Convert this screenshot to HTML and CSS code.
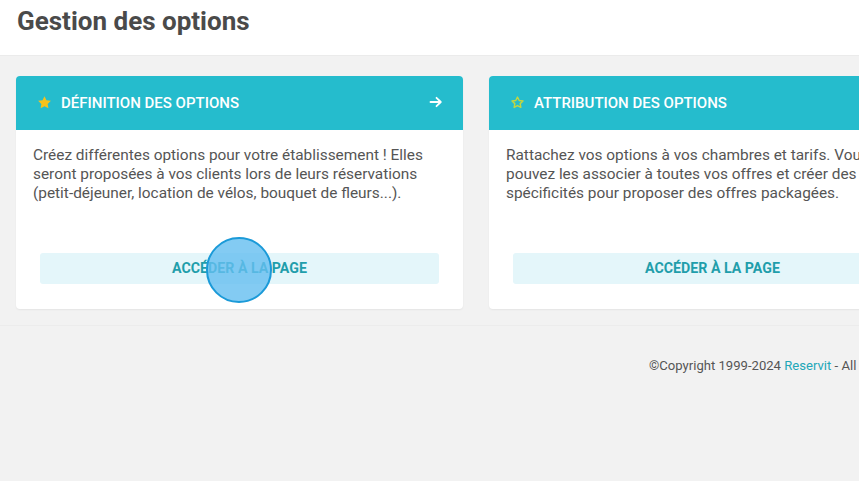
FILE: index.html
```html
<!DOCTYPE html>
<html lang="fr">
<head>
<meta charset="utf-8">
<title>Gestion des options</title>
<link rel="stylesheet" href="styles.css">
</head>
<body>
<div class="page">
  <header class="topbar">
    <h1 class="title">Gestion des options</h1>
  </header>
  <main class="content">
    <div class="cards">
      <section class="card">
        <div class="card-head">
          <svg class="star" width="15" height="15" viewBox="0 0 24 24"><path d="M12 1.8l3.1 6.6 7.1.9-5.2 4.9 1.3 7.1L12 17.8l-6.3 3.5 1.3-7.1-5.2-4.9 7.1-.9z" fill="#f7c21b"/></svg>
          <span class="card-title">Définition des options</span>
          <svg class="arrow" width="14" height="14" viewBox="0 0 14 14"><path d="M1.5 7h10M7.5 2.8L11.8 7l-4.3 4.2" fill="none" stroke="#fff" stroke-width="1.8" stroke-linecap="round" stroke-linejoin="round"/></svg>
        </div>
        <div class="card-body">
          <p class="card-text">Créez différentes options pour votre établissement ! Elles seront proposées à vos clients lors de leurs réservations (petit-déjeuner, location de vélos, bouquet de fleurs...).</p>
          <a class="btn">Accéder à la page</a>
        </div>
        <span class="click-dot"></span>
      </section>
      <section class="card">
        <div class="card-head">
          <svg class="star" width="15" height="15" viewBox="0 0 24 24"><path d="M12 3.2l2.7 5.6 6.1.8-4.5 4.2 1.1 6.1L12 16.9l-5.4 3 1.1-6.1-4.5-4.2 6.1-.8z" fill="none" stroke="#c6d63e" stroke-width="2.2" stroke-linejoin="round"/></svg>
          <span class="card-title">Attribution des options</span>
        </div>
        <div class="card-body">
          <p class="card-text">Rattachez vos options à vos chambres et tarifs. Vous pouvez les associer à toutes vos offres et créer des spécificités pour proposer des offres packagées.</p>
          <a class="btn">Accéder à la page</a>
        </div>
      </section>
    </div>
  </main>
  <footer class="footer">
    <p class="copy">©Copyright 1999-2024 <a class="link">Reservit</a> - All rights reserved</p>
  </footer>
</div>
</body>
</html>
```
FILE: styles.css
```css
* { box-sizing: border-box; }
html, body { margin: 0; padding: 0; }
body {
  background: #f2f2f2;
  font-family: Roboto, "Liberation Sans", Arial, sans-serif;
  color: #555;
  width: 859px;
  height: 481px;
  overflow: hidden;
}
.page { width: 859px; overflow: hidden; }
.topbar {
  background: #fff;
  height: 56px;
  border-bottom: 1px solid #ebebeb;
  padding: 5px 17px 0;
}
.title {
  margin: 0;
  font-size: 26px;
  font-weight: 700;
  color: #4a4a4a;
  line-height: 32px;
}
.content {
  padding: 20px 16px 16px;
  border-bottom: 1px solid #ececec;
  height: 270px;
}
.cards {
  display: flex;
  gap: 26px;
  width: 1000px;
}
.card {
  position: relative;
  width: 447px;
  flex: none;
  height: 233px;
  background: #fff;
  border-radius: 4px;
  box-shadow: 0 1px 2px rgba(0,0,0,0.06);
}
.card-head {
  background: #25bccd;
  height: 54px;
  border-radius: 4px 4px 0 0;
  display: flex;
  align-items: center;
  padding: 0 20px 0 21px;
  gap: 9px;
}
.star { flex: none; margin-top: -2px; }
.card-title {
  color: #fff;
  text-transform: uppercase;
  font-size: 15px;
  font-weight: 500;
  flex: 1;
}
.arrow { flex: none; margin-top: -2px; }
.card-body {
  padding: 16px 20px 0 17px;
  display: flex;
  flex-direction: column;
}
.card-text {
  margin: 0;
  font-size: 15.4px;
  line-height: 19px;
  color: #555;
  height: 107px;
}
.btn {
  display: block;
  margin: 0 4px 0 7px;
  height: 31px;
  line-height: 30px;
  background: #e4f6fa;
  border-radius: 3px;
  text-align: center;
  text-transform: uppercase;
  font-size: 14.2px;
  font-weight: 700;
  color: #1f9eab;
}
.click-dot {
  position: absolute;
  left: 190px;
  top: 161px;
  width: 66px;
  height: 66px;
  border-radius: 50%;
  background: rgba(100, 190, 240, 0.8);
  border: 2px solid #1b9ad8;
}
.footer {
  padding: 31px 0 0;
  height: 155px;
}
.copy {
  margin: 0 0 0 649px;
  white-space: nowrap;
  font-size: 13.1px;
  color: #555;
  line-height: 18px;
}
.link { color: #22a7b8; }
```
